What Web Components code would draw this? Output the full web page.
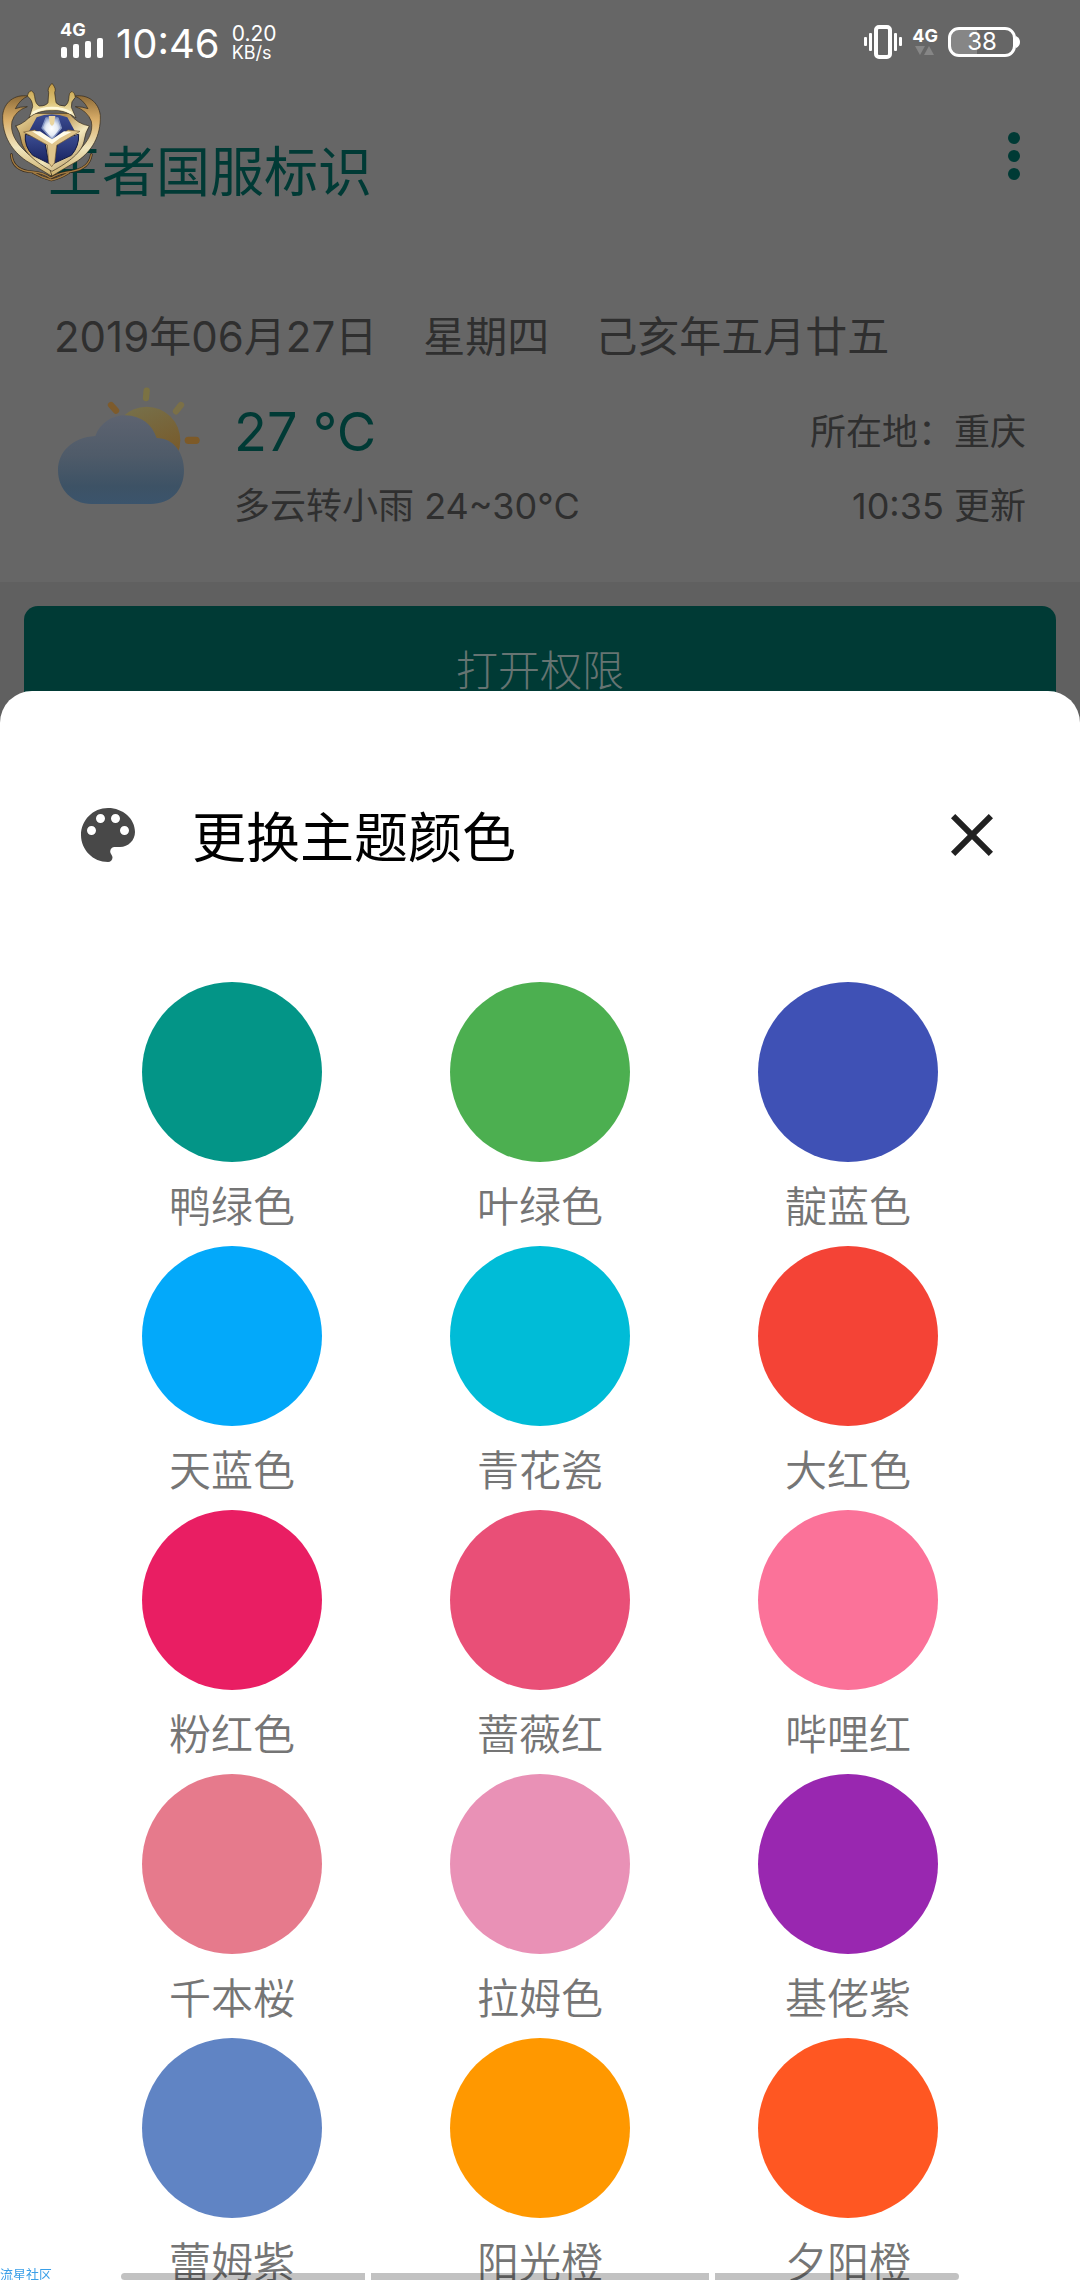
<!DOCTYPE html>
<html lang="zh-CN">
<head>
<meta charset="utf-8">
<meta name="viewport" content="width=device-width, initial-scale=1">
<title>王者国服标识</title>
<style>
  html, body { margin: 0; height: 100%; }
  body {
    background: #606060;
    color: #2f2f2f;
    font-family: Inter, "Noto Sans CJK SC", sans-serif;
    font-size: 42px;
    overflow: hidden;
    --teal: #003a35;
    --card: #666666;
  }
</style>
</head>
<body>
<status-bar></status-bar>
<app-bar>王者国服标识</app-bar>
<weather-card></weather-card>
<wide-button>打开权限</wide-button>

<theme-sheet heading="更换主题颜色">
  <color-swatch color="#039587">鸭绿色</color-swatch>
  <color-swatch color="#4caf50">叶绿色</color-swatch>
  <color-swatch color="#3f51b5">靛蓝色</color-swatch>
  <color-swatch color="#03a9fa">天蓝色</color-swatch>
  <color-swatch color="#00bcd7">青花瓷</color-swatch>
  <color-swatch color="#f44336">大红色</color-swatch>
  <color-swatch color="#e91e63">粉红色</color-swatch>
  <color-swatch color="#e94f77">蔷薇红</color-swatch>
  <color-swatch color="#fb7299">哔哩红</color-swatch>
  <color-swatch color="#e67a8c">千本桜</color-swatch>
  <color-swatch color="#e991b6">拉姆色</color-swatch>
  <color-swatch color="#9927b0">基佬紫</color-swatch>
  <color-swatch color="#6084c4">蕾姆紫</color-swatch>
  <color-swatch color="#ff9800">阳光橙</color-swatch>
  <color-swatch color="#ff5722">夕阳橙</color-swatch>
</theme-sheet>

<floating-badge></floating-badge>
<gesture-hints></gesture-hints>
<corner-mark>流星社区</corner-mark>

<script>
const define = (name, html, setup) => {
  const template = document.createElement('template');
  template.innerHTML = html;
  customElements.define(name, class extends HTMLElement {
    constructor() {
      super();
      this.attachShadow({ mode: 'open' }).append(template.content.cloneNode(true));
    }
    connectedCallback() { if (setup) setup(this, this.shadowRoot); }
  });
};

define('status-bar', `
<style>
  :host { display: flex; justify-content: space-between; align-items: center; height: 84px; padding: 0 60px; color: #fff; box-sizing: border-box; background: var(--card); }
  .group { display: flex; align-items: center; }
  .left { gap: 12px; }
  .right { gap: 10px; }
  .net { display: flex; flex-direction: column; font-size: 18px; line-height: 16px; font-weight: 700; }
  .left .net { padding-bottom: 4px; }
  .right .net { gap: 2px; }
  .time { padding-top: 4px; font-size: 40px; line-height: 48px; }
  .rate { display: flex; flex-direction: column; padding-top: 2px; font-size: 21px; line-height: 20px; }
  .rate small { font-size: 18px; line-height: 18px; }
  .battery { display: flex; align-items: center; }
  .cell { box-sizing: border-box; width: 68px; height: 30px; border: 3px solid #fff; border-radius: 11px; text-align: center; font-size: 24px; line-height: 24px; background: linear-gradient(90deg, #868686 26px, transparent 26px); }
  svg { display: block; }
</style>
<div class="group left">
  <div class="net"><span>4G</span>
    <svg width="44" height="20" fill="#fff"><rect x="1" y="9" width="6" height="11" rx="2"/><rect x="13" y="6" width="6" height="14" rx="2"/><rect x="25" y="3" width="6" height="17" rx="2"/><rect x="37" y="0" width="6" height="20" rx="2"/></svg>
  </div>
  <div class="time">10:46</div>
  <div class="rate"><span>0.20</span><small>KB/s</small></div>
</div>
<div class="group right">
  <svg width="38" height="34" fill="#fff"><rect x="0" y="12" width="3" height="9" rx="1"/><rect x="5" y="8" width="3" height="18" rx="1"/><rect x="12" y="2" width="14" height="30" rx="3" fill="none" stroke="#fff" stroke-width="4"/><rect x="30" y="8" width="3" height="18" rx="1"/><rect x="35" y="12" width="3" height="9" rx="1"/></svg>
  <div class="net"><span>4G</span>
    <svg width="24" height="10" fill="#868686"><path d="M3 0h10L8 9z"/><path d="M12 9h10L17 0z"/></svg>
  </div>
  <div class="battery"><div class="cell">38</div><svg width="4" height="14"><path d="M0 1Q4 3 4 7T0 13z" fill="#fff"/></svg></div>
</div>`);

define('app-bar', `
<style>
  :host { display: flex; justify-content: space-between; align-items: center; height: 144px; padding: 0 30px 0 48px; background: var(--card); }
  h1 { margin: 0; padding-top: 34px; font-size: 54px; line-height: 64px; font-weight: 400; color: var(--teal); }
  button { border: 0; padding: 0; background: none; color: var(--teal); }
  svg { display: block; }
</style>
<h1><slot></slot></h1>
<button aria-label="更多"><svg width="72" height="72" viewBox="0 0 24 24" fill="currentColor"><circle cx="12" cy="6" r="2"/><circle cx="12" cy="12" r="2"/><circle cx="12" cy="18" r="2"/></svg></button>`);

define('weather-card', `
<style>
  :host { display: block; padding: 79px 54px 39px; background: var(--card); }
  .date { display: flex; gap: 46px; line-height: 60px; }
  .now { display: flex; align-items: flex-start; margin-left: -4px; padding-top: 13px; }
  svg { flex: none; display: block; }
  .rows { flex: 1; margin-left: 24px; padding-top: 15px; font-size: 36px; line-height: 74px; }
  .row { display: flex; justify-content: space-between; }
  .temp { font-size: 54px; color: var(--teal); }
</style>
<div class="date"><span>2019年06月27日</span><span>星期四</span><span>己亥年五月廿五</span></div>
<div class="now">
  <svg width="160" height="130" viewBox="0 0 480 390">
    <defs>
      <linearGradient id="sun" x1="0.3" y1="0" x2="0.7" y2="1"><stop offset="0" stop-color="#77704a"/><stop offset="1" stop-color="#785523"/></linearGradient>
      <linearGradient id="cloud" x1="0.5" y1="0" x2="0.5" y2="1"><stop offset="0" stop-color="#5d6370"/><stop offset="0.45" stop-color="#4f5b69"/><stop offset="0.8" stop-color="#3d5265"/><stop offset="1" stop-color="#3b546c"/></linearGradient>
    </defs>
    <circle cx="290" cy="181" r="101" fill="url(#sun)"/>
    <g stroke-linecap="round" stroke-width="19">
      <path d="M290 32L288 54" stroke="#7b7243"/><path d="M183 75L198 92" stroke="#7d5b2c"/><path d="M393 75L378 94" stroke="#7b7047"/><path d="M415 181H438" stroke="#7d5a28" stroke-width="22"/>
    </g>
    <path d="M124 372C66 372 24 328 24 271C24 215 68 172 136 168C150 128 188 105 226 106C276 108 306 134 320 174C370 174 402 218 402 271C402 332 362 372 302 372Z" fill="url(#cloud)"/>
  </svg>
  <div class="rows">
    <div class="row"><span class="temp">27 °C</span><span>所在地：重庆</span></div>
    <div class="row"><span>多云转小雨 24~30°C</span><span>10:35 更新</span></div>
  </div>
</div>`);

define('wide-button', `
<style>
  :host { display: block; padding: 24px; }
  button { display: block; width: 100%; height: 122px; border: 0; border-radius: 14px; padding: 0; background: var(--teal); color: #667472; font: inherit; font-weight: 300; }
</style>
<button><slot></slot></button>`);

define('theme-sheet', `
<style>
  :host { position: fixed; top: 691px; right: 0; bottom: 0; left: 0; overflow: hidden; border-radius: 32px 32px 0 0; background: #fff; color: #000; }
  header { display: flex; align-items: center; padding: 104px 72px 107px; }
  h2 { flex: 1; margin: 0 48px; padding-top: 8px; font-size: 54px; line-height: 72px; font-weight: 400; }
  button { border: 0; padding: 0; background: none; }
  svg { display: block; }
  .grid { display: grid; grid-template-columns: repeat(3, 1fr); padding: 0 78px; }
</style>
<header>
  <svg width="72" height="72" viewBox="0 0 24 24" fill="#484848"><path d="M12 3c-4.970 0-9 4.030-9 9s4.030 9 9 9c.83 0 1.500-.67 1.500-1.500 0-.39-.15-.74-.39-1.010-.23-.26-.38-.61-.38-.99 0-.83.67-1.500 1.500-1.500H16c2.760 0 5-2.240 5-5 0-4.420-4.030-8-9-8zm-5.500 9c-.83 0-1.500-.67-1.500-1.500S5.670 9 6.500 9 8 9.670 8 10.500 7.330 12 6.500 12zm3-4C8.670 8 8 7.330 8 6.500S8.670 5 9.500 5s1.500.67 1.500 1.500S10.330 8 9.500 8zm5 0c-.83 0-1.500-.67-1.500-1.500S13.670 5 14.500 5s1.500.67 1.500 1.500S15.330 8 14.500 8zm3 4c-.83 0-1.500-.67-1.500-1.500S16.670 9 17.500 9s1.500.67 1.500 1.500-.67 1.500-1.500 1.500z"/></svg>
  <h2></h2>
  <button aria-label="关闭"><svg width="72" height="72" viewBox="0 0 24 24" fill="#212121"><path d="M19 6.410L17.590 5 12 10.590 6.410 5 5 6.410 10.590 12 5 17.590 6.410 19 12 13.410 17.590 19 19 17.590 13.410 12z"/></svg></button>
</header>
<div class="grid"><slot></slot></div>`, (host, root) => {
  root.querySelector('h2').textContent = host.getAttribute('heading');
});

define('color-swatch', `
<style>
  :host { display: block; }
  button { display: flex; flex-direction: column; align-items: center; gap: 6px; width: 100%; border: 0; padding: 0; background: none; color: #757575; font: inherit; font-weight: 350; line-height: 78px; }
  i { width: 180px; height: 180px; border-radius: 50%; }
</style>
<button><i></i><slot></slot></button>`, (host, root) => {
  root.querySelector('i').style.background = host.getAttribute('color');
});

define('floating-badge', `
<style>
  :host { position: fixed; left: 0; top: 78px; }
  svg { display: block; }
</style>
<svg width="110" height="112" viewBox="0 0 330 336" stroke-linejoin="round" stroke-linecap="round">
  <defs>
    <linearGradient id="gold" x1="0" y1="0" x2="1" y2="1"><stop offset="0" stop-color="#efdfa8"/><stop offset="0.35" stop-color="#b9924f"/><stop offset="0.6" stop-color="#f3e8bd"/><stop offset="1" stop-color="#9c7438"/></linearGradient>
    <linearGradient id="wing" x1="0" y1="0" x2="0" y2="1"><stop offset="0" stop-color="#8d6b38"/><stop offset="0.3" stop-color="#d9ad68"/><stop offset="0.65" stop-color="#f0e6bf"/><stop offset="1" stop-color="#cdb06c"/></linearGradient>
    <linearGradient id="crown" x1="0" y1="0" x2="0" y2="1"><stop offset="0" stop-color="#c39b45"/><stop offset="0.55" stop-color="#ddc478"/><stop offset="1" stop-color="#fbf5d5"/></linearGradient>
    <linearGradient id="blue" x1="0" y1="0" x2="0" y2="1"><stop offset="0" stop-color="#3c4d92"/><stop offset="1" stop-color="#182260"/></linearGradient>
    <radialGradient id="gem"><stop offset="0" stop-color="#fff"/><stop offset="0.6" stop-color="#e6ecf5"/><stop offset="1" stop-color="#9dacd0"/></radialGradient>
  </defs>
  <g fill="none" stroke="#34281a" stroke-width="8"><path d="M34 230Q38 280 100 282Q130 284 152 300Q180 284 215 280Q268 272 274 230"/><path d="M100 284Q128 300 154 306Q182 300 206 284"/></g>
  <g fill="none" stroke="#a27b42" stroke-width="4"><path d="M34 230Q38 280 100 282Q130 284 152 300Q180 284 215 280Q268 272 274 230"/><path d="M100 284Q128 300 154 306Q182 300 206 284"/></g>
  <g fill="url(#wing)" stroke="#33281a" stroke-width="2">
    <path d="M84 54C44 48 12 72 8 112C6 176 38 220 78 248Q112 268 154 294L158 276Q110 252 78 222C44 190 30 162 36 130Q46 98 82 86Q60 86 46 92Q60 64 84 54Z"/>
    <path d="M224 54C264 48 296 72 301 112C303 176 274 220 234 248Q198 268 156 294L150 276Q198 252 232 222C266 190 280 162 274 130Q262 98 226 86Q248 86 264 92Q250 64 224 54Z"/>
  </g>
  <path d="M48 144Q78 134 98 106L208 106Q232 138 268 144Q256 162 252 190C246 222 208 252 156 280C106 252 70 222 64 190Q60 162 48 144Z" fill="url(#gold)" stroke="#33281a" stroke-width="2"/>
  <path d="M76 170Q72 204 98 232L146 256L134 188ZM236 170Q238 204 214 232L162 256L174 188Z" fill="url(#blue)" stroke="#111840" stroke-width="3"/>
  <path d="M84 166L110 118Q154 100 202 118L228 166L156 204Z" fill="url(#blue)"/>
  <path d="M138 120L174 120L184 150L156 184L126 150Z" fill="url(#gem)" stroke="#8495c2" stroke-width="4"/>
  <path d="M146 114H166L162 138L156 144L150 138Z" fill="#ead5a0"/>
  <path d="M72 162L104 156L156 188L204 156L240 160L170 202L164 254L155 266L146 254L142 202Z" fill="#dfc48b" stroke="#745b35" stroke-width="2"/>
  <path d="M96 160L120 160L156 184L192 160L214 162L180 180L156 198L130 182Z" fill="#fffbe9"/>
  <path d="M88 118L98 86Q98 66 82 54Q84 40 94 38Q104 44 104 56Q106 78 118 84Q138 84 144 74L146 44Q140 32 156 16Q170 32 164 44L168 74Q176 84 194 84Q206 78 207 56Q206 44 216 40Q226 46 226 58Q212 70 214 88L228 120Q194 94 156 98Q116 96 88 118Z" fill="url(#crown)" stroke="#33281a" stroke-width="2"/>
  <path d="M100 104Q124 90 156 90Q190 90 212 104" fill="none" stroke="#fff9d9" stroke-width="7"/>
</svg>`);

define('gesture-hints', `
<style>
  :host { position: fixed; left: 0; right: 0; bottom: 0; display: grid; grid-template-columns: 244fr 338fr 244fr; gap: 6px; padding: 0 121px; }
  i { height: 7px; background: rgba(0, 0, 0, 0.24); }
  i:first-of-type { border-radius: 4px 0 0 4px; }
  i:last-of-type { border-radius: 0 4px 4px 0; }
</style>
<i></i><i></i><i></i>`);

define('corner-mark', `
<style>
  :host { position: fixed; left: 0; bottom: 0; color: #3a9fe8; font-size: 13px; line-height: 12px; }
</style>
<slot></slot>`);
</script>
</body>
</html>
